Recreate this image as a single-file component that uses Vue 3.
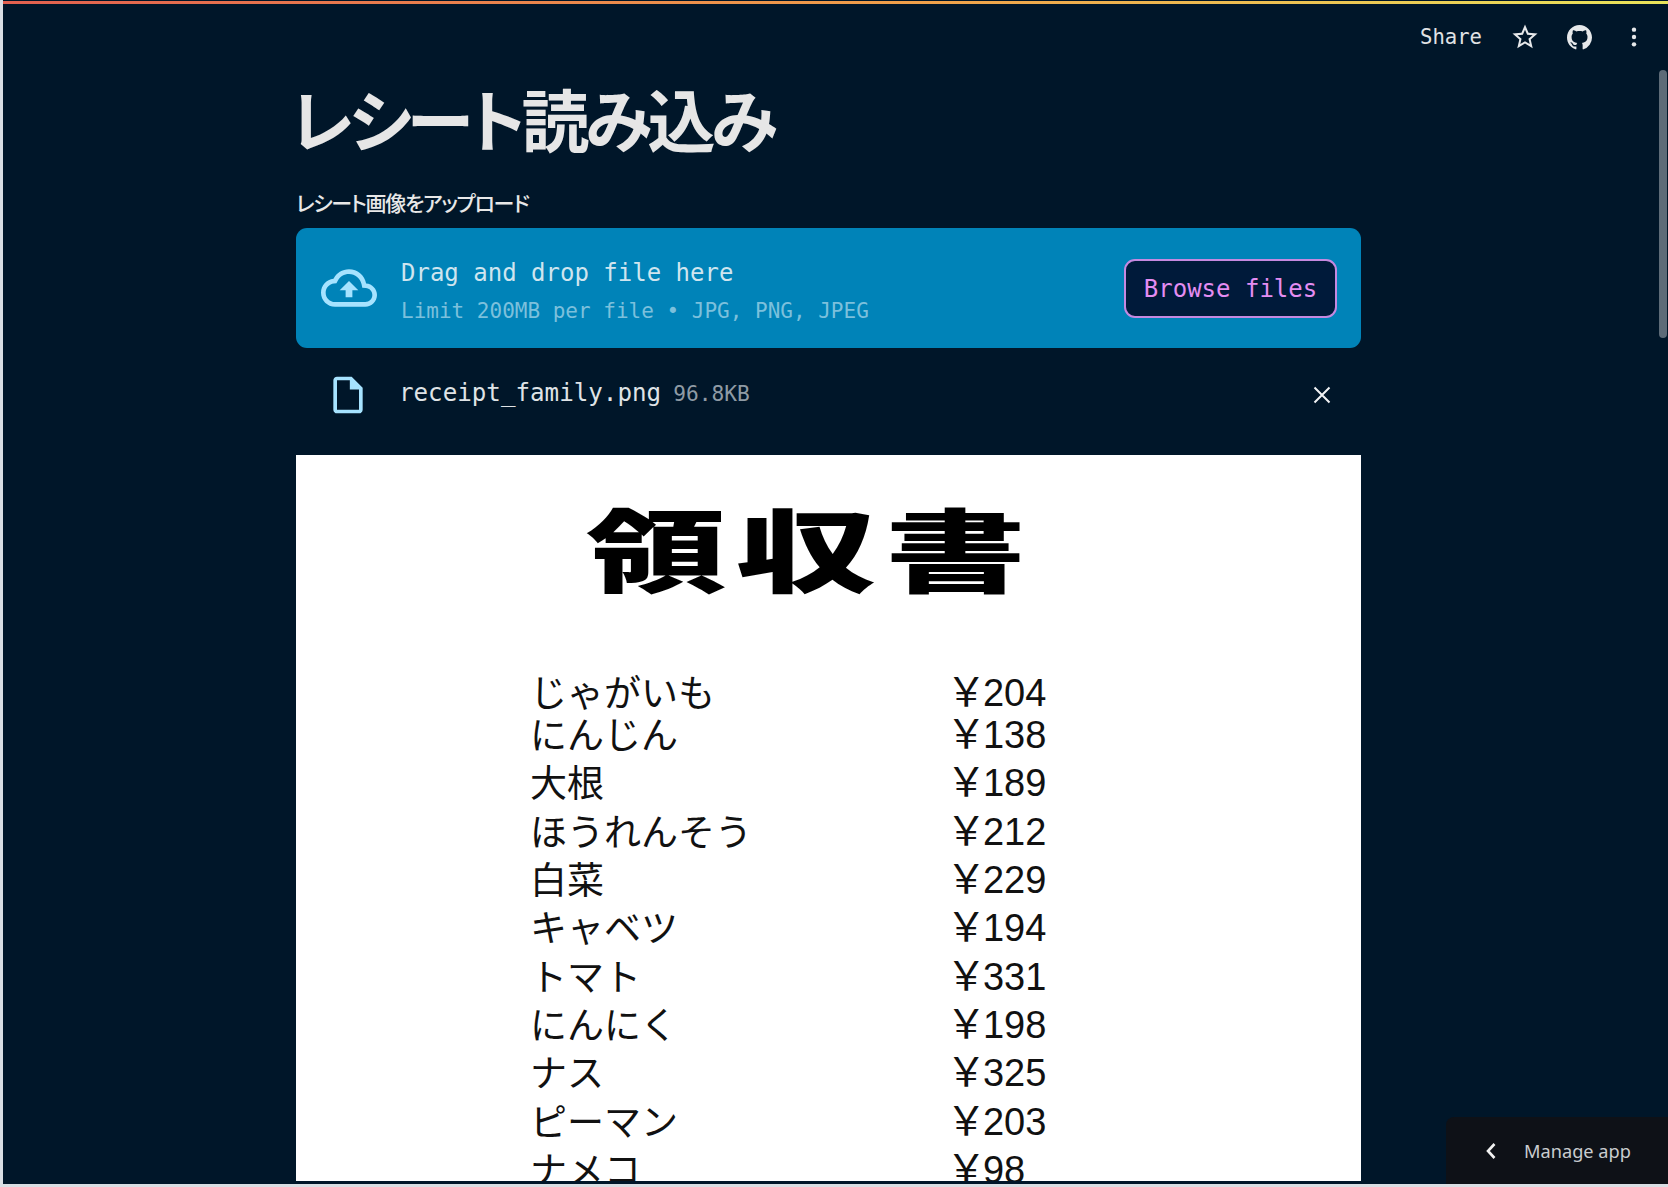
<script setup>
const items = [
  ['じゃがいも', '204'], ['にんじん', '138'], ['大根', '189'], ['ほうれんそう', '212'],
  ['白菜', '229'], ['キャベツ', '194'], ['トマト', '331'], ['にんにく', '198'],
  ['ナス', '325'], ['ピーマン', '203'], ['ナメコ', '98']
]
</script>

<template>
  <div class="shell">
    <div class="topbar"></div>
    <header class="header">
      <span class="share">Share</span>
      <svg class="hicon star" viewBox="0 0 24 24"><path d="M22 9.24l-7.19-.62L12 2 9.19 8.63 2 9.24l5.46 4.73L5.82 21 12 17.27 18.18 21l-1.63-7.03L22 9.24zM12 15.4l-3.76 2.27 1-4.28-3.32-2.88 4.38-.38L12 6.1l1.71 4.04 4.38.38-3.32 2.88 1 4.28L12 15.4z"/></svg>
      <svg class="hicon gh" viewBox="0 0 16 16"><path d="M8 0C3.58 0 0 3.58 0 8c0 3.54 2.29 6.53 5.47 7.59.4.07.55-.17.55-.38 0-.19-.01-.82-.01-1.49-2.01.37-2.53-.49-2.69-.94-.09-.23-.48-.94-.82-1.13-.28-.15-.68-.52-.01-.53.63-.01 1.08.58 1.23.82.72 1.21 1.87.87 2.33.66.07-.52.28-.87.51-1.07-1.78-.2-3.64-.89-3.64-3.95 0-.87.31-1.59.82-2.15-.08-.2-.36-1.02.08-2.12 0 0 .67-.21 2.2.82.64-.18 1.32-.27 2-.27.68 0 1.36.09 2 .27 1.53-1.04 2.2-.82 2.2-.82.44 1.1.16 1.92.08 2.12.51.56.82 1.27.82 2.15 0 3.07-1.87 3.75-3.65 3.95.29.25.54.73.54 1.48 0 1.07-.01 1.93-.01 2.2 0 .21.15.46.55.38A8.013 8.013 0 0016 8c0-4.42-3.58-8-8-8z"/></svg>
      <svg class="hicon dots" viewBox="0 0 6 24"><circle cx="3" cy="4" r="2.4"/><circle cx="3" cy="12" r="2.4"/><circle cx="3" cy="20" r="2.4"/></svg>
    </header>

    <main class="main">
      <h1 class="title">レシート読み込み</h1>
      <div class="label">レシート画像をアップロード</div>

      <section class="drop">
        <svg class="cloud" viewBox="0 0 24 24"><path d="M19.35 10.04C18.67 6.59 15.64 4 12 4 9.11 4 6.6 5.64 5.35 8.04 2.34 8.36 0 10.91 0 14c0 3.31 2.69 6 6 6h13c2.76 0 5-2.24 5-5 0-2.64-2.05-4.78-4.65-4.96zM19 18H6c-2.21 0-4-1.79-4-4 0-2.05 1.53-3.76 3.56-3.97l1.07-.11.5-.95C8.08 7.14 9.94 6 12 6c2.62 0 4.88 1.86 5.39 4.43l.3 1.5 1.53.11c1.56.1 2.78 1.41 2.78 2.96 0 1.65-1.35 3-3 3zM8 13h2.55v3h2.9v-3H16l-4-4z"/></svg>
        <div class="drop-text">
          <div class="drag">Drag and drop file here</div>
          <div class="limit">Limit 200MB per file • JPG, PNG, JPEG</div>
        </div>
        <button class="browse">Browse files</button>
      </section>

      <section class="file">
        <svg class="fileicon" viewBox="0 0 24 24"><path d="M14 2H6c-1.1 0-1.99.9-1.99 2L4 20c0 1.1.89 2 1.99 2H18c1.1 0 2-.9 2-2V8l-6-6zM6 20V4h7v5h5v11H6z"/></svg>
        <span class="fname">receipt_family.png</span>
        <span class="fsize">96.8KB</span>
        <svg class="close" viewBox="0 0 18 18"><path d="M1.5 1.5l15 15M16.5 1.5l-15 15"/></svg>
      </section>

      <section class="receipt">
        <div class="rtitle"><span>領収書</span></div>
        <div class="rows">
          <div class="row" v-for="it in items" :key="it[0]">
            <span class="rname">{{ it[0] }}</span>
            <span class="rprice"><span class="yen">￥</span>{{ it[1] }}</span>
          </div>
        </div>
      </section>
    </main>

    <div class="manage">
      <svg class="chev" viewBox="0 0 12 18"><path d="M9.5 2L3 9l6.5 7"/></svg>
      <span>Manage app</span>
    </div>
    <div class="scroll"></div>
  </div>
</template>

<style scoped>
.shell {
  position: relative;
  height: 1184px;
  margin-left: 3px;
  background: #001629;
  overflow: hidden;
  display: flex;
  flex-direction: column;
}
.topbar {
  position: absolute;
  top: 1px;
  left: -3px;
  right: 0;
  height: 3px;
  background: linear-gradient(90deg, #e2604f, #f0a04a 55%, #e9e45a);
}
.header {
  height: 74px;
  flex: none;
  display: flex;
  align-items: center;
  justify-content: flex-end;
  padding-right: 31px;
  box-sizing: border-box;
  color: #e0e2e4;
}
.share {
  font: 20.6px "DejaVu Sans Mono", monospace;
  margin-right: 28px;
}
.hicon { fill: #e6e8ea; flex: none; }
.star { width: 30px; height: 30px; margin-right: 27px; }
.gh { width: 25px; height: 25px; margin-right: 39px; }
.dots { width: 6px; height: 22px; }
.main {
  flex: 1;
  padding-left: 293px;
  width: 1065px;
  box-sizing: content-box;
}
.title {
  margin: 0 0 0 -6px;
  height: 92px;
  color: #e6e6e6;
  font: 700 68px/88px "Noto Sans CJK JP", sans-serif;
  font-feature-settings: "palt";
  letter-spacing: -4.4px;
  white-space: nowrap;
}
.label {
  margin-top: 13px;
  height: 49px;
  color: #e8e8e8;
  font: 500 21px/46px "Noto Sans CJK JP", sans-serif;
  font-feature-settings: "palt";
  letter-spacing: -1.3px;
}
.drop {
  height: 120px;
  border-radius: 11px;
  background: #0083b8;
  display: flex;
  align-items: center;
  padding: 0 25px;
  box-sizing: border-box;
}
.cloud { width: 56px; height: 56px; fill: #a6e3ff; flex: none; }
.drop-text {
  flex: 1;
  margin-left: 24px;
  padding-top: 7px;
  font-family: "DejaVu Sans Mono", monospace;
}
.drag { color: #cfe5ef; font-size: 24px; line-height: 38px; }
.limit { color: #7cc0dc; font-size: 21px; line-height: 38px; }
.browse {
  width: 213px;
  height: 59px;
  margin-right: -1px;
  border: 2px solid #c589e0;
  border-radius: 11px;
  background: #001a3a;
  color: #e48df2;
  font: 24px "DejaVu Sans Mono", monospace;
  padding: 2px 0 0;
}
.file {
  height: 107px;
  display: flex;
  align-items: flex-start;
  padding: 0 30px 0 30px;
  position: relative;
  box-sizing: border-box;
}
.fileicon { width: 44px; height: 44px; fill: #a6e3ff; margin-top: 25px; flex: none; }
.fname { margin-left: 29px; margin-top: 27px; color: #dfe3e6; font: 24.2px/36px "DejaVu Sans Mono", monospace; }
.fsize { margin-left: 12px; margin-top: 28px; color: #8f9ba5; font: 21.2px/36px "DejaVu Sans Mono", monospace; }
.close { width: 18px; height: 18px; margin-left: auto; margin-top: 38px; fill: none; stroke: #f0f2f4; stroke-width: 2; }
.receipt {
  background: #fff;
  height: 726px;
  overflow: hidden;
  color: #111;
}
.rtitle {
  height: 214px;
  padding-top: 40px;
  box-sizing: border-box;
  margin-left: 290px;
}
.rtitle span {
  display: inline-block;
  transform-origin: left top;
  transform: scale(1.56, 1);
  font: 900 90px/1.15 "Noto Sans CJK JP", sans-serif;
  letter-spacing: 6px;
  color: #000;
  white-space: nowrap;
}
.rows { padding-left: 234px; }
.row {
  display: grid;
  grid-template-columns: 421px auto;
  height: 48.3px;
  align-items: center;
  white-space: nowrap;
}
.row:first-child { height: 40px; }
.rname { font: 37px/40px "Noto Sans CJK JP", sans-serif; }
.rprice { font: 38px/40px "Liberation Sans", sans-serif; }
.yen { font: 40px/40px "Noto Sans CJK JP", sans-serif; font-feature-settings: "palt"; margin-right: 1.5px; }
.manage {
  position: absolute;
  right: 0;
  bottom: 0;
  width: 222px;
  height: 67px;
  background: #0e1117;
  border-top-left-radius: 8px;
  color: #c9cccf;
  display: flex;
  align-items: center;
  padding-left: 39px;
  box-sizing: border-box;
  font: 18.2px "Noto Sans", sans-serif;
}
.chev { width: 12px; height: 18px; fill: none; stroke: #f2f2f2; stroke-width: 2.6; margin-right: 27px; }
.scroll {
  position: absolute;
  top: 70px;
  right: 1px;
  width: 8px;
  height: 268px;
  background: #5d6b78;
  border-radius: 4px;
}
</style>

<style>
html, body { margin: 0; background: #d9dee3; overflow: hidden; }
</style>
